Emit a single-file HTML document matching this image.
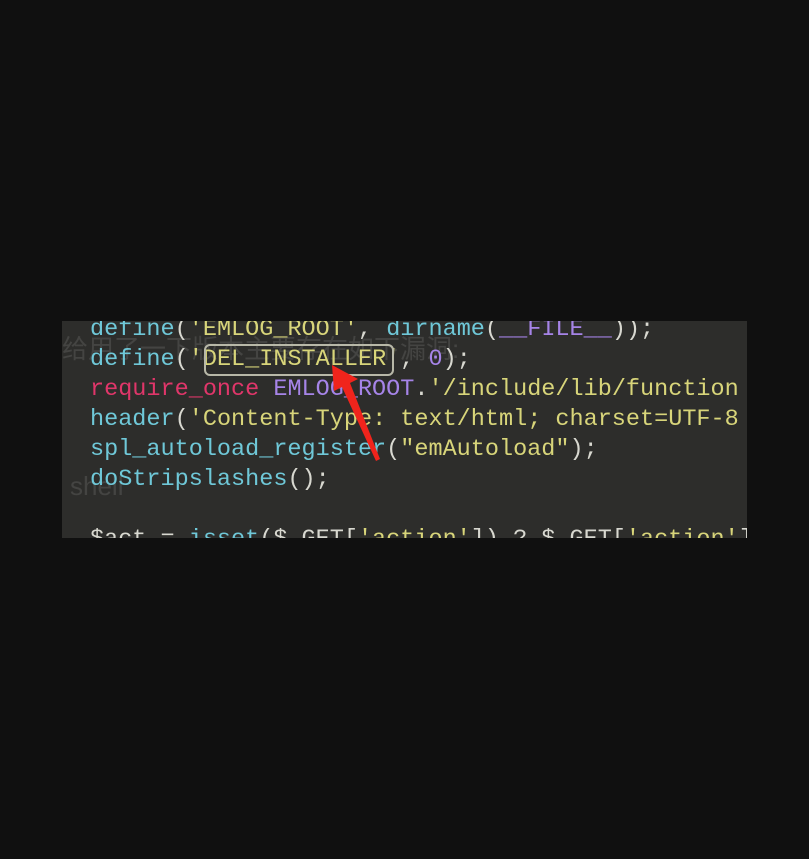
<!DOCTYPE html>
<html><head><meta charset="utf-8"><style>
html,body{margin:0;padding:0;background:#101010;width:809px;height:859px;overflow:hidden}
#img{position:absolute;left:62px;top:321px;width:685px;height:217px;background:#2d2d2b;overflow:hidden}
pre{position:absolute;left:28px;top:-6px;margin:0;font-family:"Liberation Mono",monospace;font-size:23.5px;line-height:30px;color:#6fc8d8;letter-spacing:0}
.s{color:#d8d57a}.k{color:#e0366a}.p{color:#a684e8}.w{color:#d8d8d0}
.ghost{position:absolute;font-family:"Liberation Sans","Noto Sans CJK SC",sans-serif;color:rgba(200,200,200,0.15);font-size:26px}
#box{position:absolute;left:142px;top:23px;width:186px;height:28px;border:2px solid #b8b8a8;border-radius:6px}
</style></head><body>
<div id="img">
<div class="ghost" style="left:0;top:8px">给用了一下版本主要存在如下漏洞:</div>
<div class="ghost" style="left:8px;top:150px">shell</div>
<pre><span>define</span><span class="w">(</span><span class="s">'EMLOG_ROOT'</span><span class="w">, </span>dirname<span class="w">(</span><span class="p">__FILE__</span><span class="w">));</span>
define<span class="w">(</span><span class="s">'DEL_INSTALLER'</span><span class="w">, </span><span class="p">0</span><span class="w">);</span>
<span class="k">require_once</span> <span class="p">EMLOG_ROOT</span><span class="w">.</span><span class="s">'/include/lib/function</span>
header<span class="w">(</span><span class="s">'Content-Type: text/html; charset=UTF-8</span>
spl_autoload_register<span class="w">(</span><span class="s">"emAutoload"</span><span class="w">);</span>
doStripslashes<span class="w">();</span>

<span class="w">$act = </span>isset<span class="w">($_GET[</span><span class="s">'action'</span><span class="w">]) ? $_GET[</span><span class="s">'action'</span><span class="w">]</span></pre>
<div id="box"></div>
<svg style="position:absolute;left:0;top:0" width="685" height="217"><polygon points="270,44 296,58 288,62 318,138 314,140 280,66 272,70" fill="#f0241c"/></svg>
</div>
</body></html>
